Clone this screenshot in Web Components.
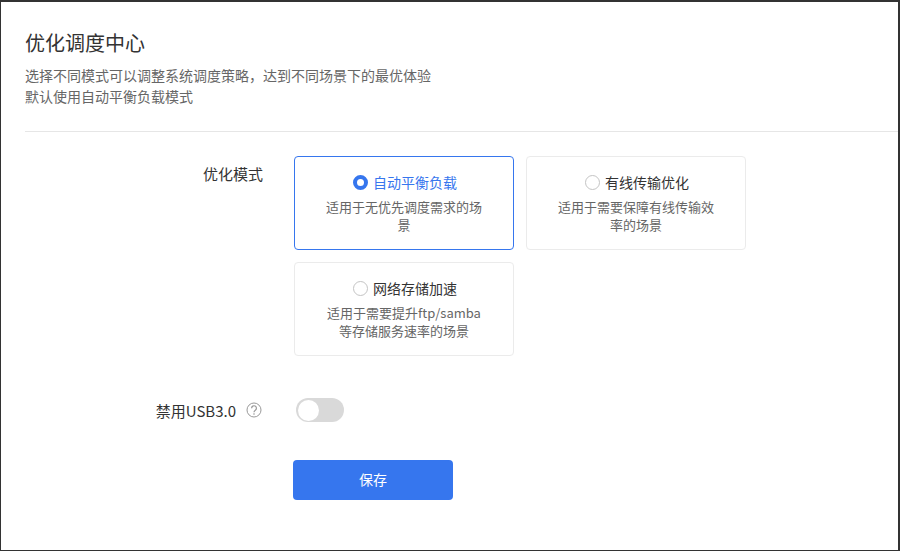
<!DOCTYPE html>
<html lang="zh">
<head>
<meta charset="utf-8">
<title>优化调度中心</title>
<style>
  html, body { margin: 0; height: 100%; background: #fff; }
  body { font-family: "Noto Sans CJK SC", "Noto Sans", sans-serif; color: #333; }
</style>
</head>
<body>
<sched-page>
  <page-header slot="header" heading="优化调度中心">
    <div>选择不同模式可以调整系统调度策略，达到不同场景下的最优体验</div>
    <div>默认使用自动平衡负载模式</div>
  </page-header>

  <form-row label="优化模式" class="modes">
    <mode-group>
      <mode-card heading="自动平衡负载" checked>适用于无优先调度需求的场景</mode-card>
      <mode-card heading="有线传输优化">适用于需要保障有线传输效率的场景</mode-card>
      <mode-card heading="网络存储加速">适用于需要提升ftp/samba等存储服务速率的场景</mode-card>
    </mode-group>
  </form-row>

  <form-row label="禁用USB3.0" help class="usb">
    <toggle-switch></toggle-switch>
  </form-row>

  <form-row class="save">
    <save-button>保存</save-button>
  </form-row>
</sched-page>

<script>
class SchedPage extends HTMLElement {
  constructor() {
    super();
    this.attachShadow({ mode: 'open' });
    this.shadowRoot.innerHTML = `
      <style>
        :host {
          display: block;
          box-sizing: border-box;
          width: 900px;
          height: 551px;
          border: 1px solid #333;
          border-top-width: 2px;
          border-right-width: 2px;
          overflow: hidden;
          background: #fff;
        }
        .body {
          display: flex;
          flex-direction: column;
          padding-top: 24px;
        }
        ::slotted(.usb) { margin-top: 36px; }
        ::slotted(.save) { margin-top: 32px; }
      </style>
      <slot name="header"></slot>
      <div class="body"><slot></slot></div>
    `;
  }
}

class PageHeader extends HTMLElement {
  constructor() {
    super();
    this.attachShadow({ mode: 'open' });
  }
  connectedCallback() {
    const heading = this.getAttribute('heading') || '';
    this.shadowRoot.innerHTML = `
      <style>
        :host {
          display: block;
          margin-left: 24px;
          padding: 26px 0 24px;
          border-bottom: 1px solid #e6e6e6;
        }
        h1 {
          margin: 0 0 7px;
          font-size: 20px;
          font-weight: 400;
          line-height: 30px;
          color: #333;
        }
        .desc {
          font-size: 14px;
          line-height: 21px;
          color: #666;
        }
      </style>
      <h1>${heading}</h1>
      <div class="desc"><slot></slot></div>
    `;
  }
}

class FormRow extends HTMLElement {
  constructor() {
    super();
    this.attachShadow({ mode: 'open' });
  }
  connectedCallback() {
    const label = this.getAttribute('label') || '';
    const help = this.hasAttribute('help') ? `
      <svg class="help" width="16" height="16" viewBox="0 0 16 16" fill="none" stroke="#999">
        <circle cx="8" cy="8" r="7"/>
        <path d="M5.6 6.2a2.4 2.4 0 1 1 3.7 2C8.5 8.8 8 9.2 8 10.2" stroke-width="1.2"/>
        <circle cx="8" cy="12" r=".8" fill="#999" stroke="none"/>
      </svg>` : '';
    this.shadowRoot.innerHTML = `
      <style>
        :host {
          display: flex;
          align-items: flex-start;
        }
        .label {
          flex: 0 0 262px;
          height: 36px;
          display: flex;
          justify-content: flex-end;
          align-items: center;
          font-size: 15px;
          color: #333;
        }
        :host(.modes) .label { height: 34px; }
        .help { margin: 0 1px 0 10px; }
      </style>
      <div class="label"><span>${label}</span>${help}</div>
      <slot></slot>
    `;
  }
}

class ModeGroup extends HTMLElement {
  constructor() {
    super();
    this.attachShadow({ mode: 'open' });
    this.shadowRoot.innerHTML = `
      <style>
        :host {
          display: grid;
          grid-template-columns: 220px 220px;
          gap: 12px;
          margin-left: 31px;
        }
      </style>
      <slot></slot>
    `;
  }
}

class ModeCard extends HTMLElement {
  constructor() {
    super();
    this.attachShadow({ mode: 'open' });
  }
  connectedCallback() {
    const heading = this.getAttribute('heading') || '';
    this.shadowRoot.innerHTML = `
      <style>
        :host {
          display: block;
          box-sizing: border-box;
          height: 94px;
          padding: 15px 30px 0;
          border: 1px solid #ebebeb;
          border-radius: 4px;
          text-align: center;
          background: #fff;
        }
        :host([checked]) { border-color: #3676ee; }
        .title {
          display: flex;
          justify-content: center;
          align-items: center;
          gap: 5px;
          height: 20px;
          padding-left: 2px;
          font-size: 14px;
          color: #333;
        }
        :host([checked]) .title { color: #3676ee; }
        .radio {
          box-sizing: border-box;
          flex: none;
          width: 15px;
          height: 15px;
          border-radius: 50%;
          border: 1px solid #c4c4c4;
          background: #fff;
        }
        :host([checked]) .radio { border: 4px solid #3676ee; }
        .desc {
          margin-top: 6px;
          font-size: 13px;
          line-height: 18px;
          color: #666;
          word-break: break-all;
        }
      </style>
      <div class="title"><span class="radio"></span><span>${heading}</span></div>
      <div class="desc"><slot></slot></div>
    `;
  }
}

class ToggleSwitch extends HTMLElement {
  constructor() {
    super();
    this.attachShadow({ mode: 'open' });
    this.shadowRoot.innerHTML = `
      <style>
        :host {
          display: block;
          box-sizing: border-box;
          width: 48px;
          height: 24px;
          padding: 1.5px;
          margin: 6px 0 0 33px;
          border-radius: 12px;
          background: #d9d9d9;
        }
        .knob {
          width: 21px;
          height: 21px;
          border-radius: 50%;
          background: #fff;
        }
      </style>
      <div class="knob"></div>
    `;
  }
}

class SaveButton extends HTMLElement {
  constructor() {
    super();
    this.attachShadow({ mode: 'open' });
    this.shadowRoot.innerHTML = `
      <style>
        :host {
          display: block;
          width: 160px;
          height: 40px;
          margin-left: 30px;
          border-radius: 4px;
          background: #3676ee;
          color: #fff;
          font-size: 14px;
          line-height: 38px;
          text-align: center;
        }
      </style>
      <slot></slot>
    `;
  }
}

customElements.define('sched-page', SchedPage);
customElements.define('page-header', PageHeader);
customElements.define('form-row', FormRow);
customElements.define('mode-group', ModeGroup);
customElements.define('mode-card', ModeCard);
customElements.define('toggle-switch', ToggleSwitch);
customElements.define('save-button', SaveButton);
</script>
</body>
</html>
